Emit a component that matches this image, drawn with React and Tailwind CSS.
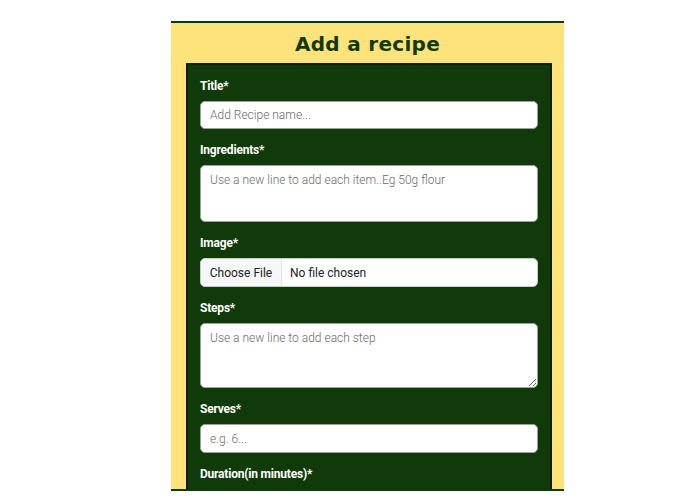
import React from "react";

const labelCls = "block text-[12px] leading-4 font-bold text-white mb-[7px] tracking-[-0.2px]";
const inputCls =
  "block w-full bg-white border border-[#9ca39a] rounded-[5px] px-[9px] text-[12px] font-light text-[#333] placeholder:text-[#6b6b6b] outline-none";

function Field({ label, children, last }) {
  return (
    <div className={last ? "" : "mb-[13px]"}>
      <label className={labelCls}>{label}</label>
      {children}
    </div>
  );
}

export default function App() {
  return (
    <div className="h-[500px] overflow-hidden bg-white" style={{ fontFamily: "Roboto, 'Liberation Sans', sans-serif" }}>
      <div className="ml-[171px] mt-[21px] w-[393px]">
        <div className="h-[468px] overflow-hidden bg-[#fee27a] border-t-[2px] border-[#0f3a0a]">
          <h1
            className="h-[40px] flex items-center justify-center pt-[2px] text-[#113a0b] text-[20px] font-bold tracking-[0.3px]"
            style={{ fontFamily: "'Comic Sans MS', 'DejaVu Sans', sans-serif" }}
          >
            Add a recipe
          </h1>
          <div className="ml-[15px] w-[366px] bg-[#113a0b] border-2 border-[#0a1c06] px-3 pt-[13px] pb-4">
            <Field label="Title*">
              <input className={`${inputCls} h-[28px]`} placeholder="Add Recipe name..." />
            </Field>
            <Field label="Ingredients*">
              <textarea
                className={`${inputCls} h-[57px] pt-[5px] resize-none`}
                placeholder="Use a new line to add each item..Eg 50g flour"
              />
            </Field>
            <Field label="Image*">
              <div className="flex h-[29px] bg-white border border-[#c9ccc8] rounded-[5px] overflow-hidden text-[12px] text-[#222]">
                <div className="w-[81px] shrink-0 flex items-center justify-center bg-[#f6f7f9] border-r border-[#e3e5e8]">
                  Choose File
                </div>
                <div className="flex items-center pl-[8px]">No file chosen</div>
              </div>
            </Field>
            <Field label="Steps*">
              <textarea
                className={`${inputCls} h-[65px] pt-[5px]`}
                placeholder="Use a new line to add each step"
              />
            </Field>
            <Field label="Serves*">
              <input className={`${inputCls} h-[29px]`} placeholder="e.g. 6..." />
            </Field>
            <Field label="Duration(in minutes)*" last>
              <input className={`${inputCls} h-[29px]`} placeholder="e.g. 45..." />
            </Field>
          </div>
        </div>
        <div className="h-[2px] bg-[#0f3a0a]" />
      </div>
    </div>
  );
}
